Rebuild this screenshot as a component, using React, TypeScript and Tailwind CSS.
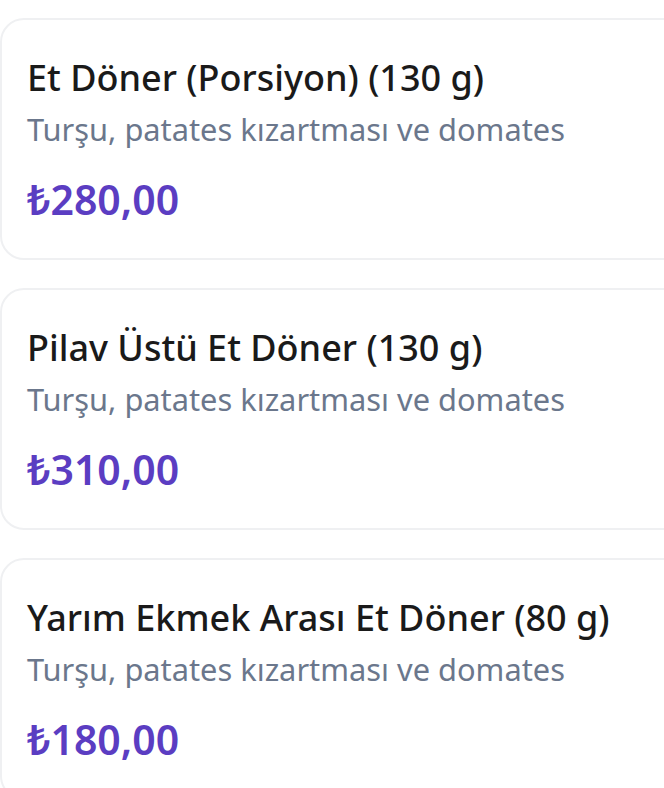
const items = [
	{ name: 'Et Döner (Porsiyon) (130 g)', desc: 'Turşu, patates kızartması ve domates', price: '₺280,00' },
	{ name: 'Pilav Üstü Et Döner (130 g)', desc: 'Turşu, patates kızartması ve domates', price: '₺310,00' },
	{ name: 'Yarım Ekmek Arası Et Döner (80 g)', desc: 'Turşu, patates kızartması ve domates', price: '₺180,00' },
];

export default function App() {
	return (
		<div className="h-[788px] w-[664px] overflow-hidden bg-white font-['Noto_Sans',sans-serif]">
			<div className="flex w-[720px] flex-col gap-[28px] pt-[18px]">
				{items.map((item) => (
					<div
						key={item.name}
						className="flex h-[242px] flex-col rounded-[24px] border-2 border-[#eff0f2] bg-white pl-[25px] pt-[34px]">
						<h3 className="text-[36px] font-medium leading-[48px] text-[#1a1a1a]">{item.name}</h3>
						<p className="mt-[7px] text-[30.8px] leading-[40px] text-[#6b778c]">{item.desc}</p>
						<p className="mt-[24px] text-[41px] font-semibold leading-[52px] text-[#5b3dc2]">{item.price}</p>
					</div>
				))}
			</div>
		</div>
	);
}
